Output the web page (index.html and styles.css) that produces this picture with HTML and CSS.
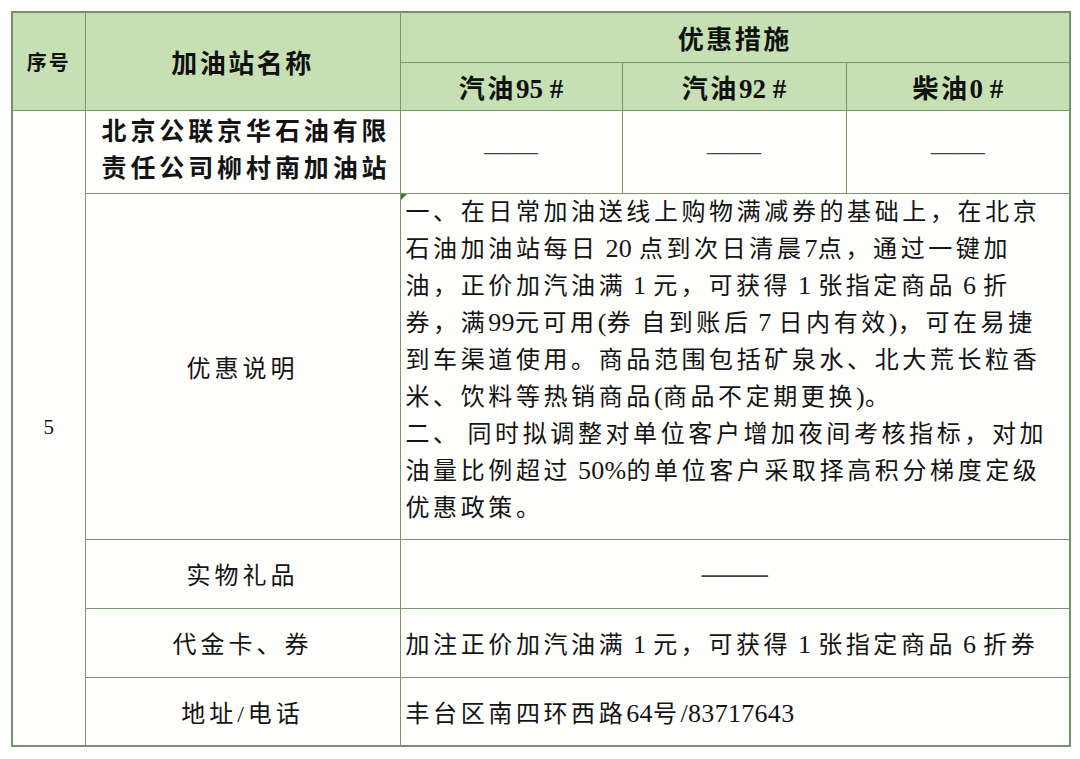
FILE: index.html
```html
<!DOCTYPE html>
<html lang="zh-CN">
<head>
<meta charset="utf-8">
<title>优惠措施</title>
<link rel="stylesheet" href="styles.css">
</head>
<body>
<table class="grid">
  <colgroup>
    <col class="c-no">
    <col class="c-name">
    <col class="c-fuel">
    <col class="c-fuel2">
    <col class="c-fuel2">
  </colgroup>
  <thead>
    <tr class="h1">
      <th rowspan="2" class="h-no">序号</th>
      <th rowspan="2" class="h-name">加油站名称</th>
      <th colspan="3">优惠措施</th>
    </tr>
    <tr class="h2">
      <th>汽油<span class="hl">95 #</span></th>
      <th>汽油<span class="hl">92 #</span></th>
      <th>柴油<span class="hl">0 #</span></th>
    </tr>
  </thead>
  <tbody>
    <tr class="r-name">
      <td rowspan="5" class="no">5</td>
      <td class="name">北京公联京华石油有限<br>责任公司柳村南加油站</td>
      <td class="dash">——</td>
      <td class="dash">——</td>
      <td class="dash">——</td>
    </tr>
    <tr class="r-desc">
      <td class="label">优惠说明</td>
      <td colspan="3" class="desc"><span class="mark"></span>一、在日常加油送线上购物满减券的基础上，在北京<br>石油加油站每日<span class="lat"> 20 </span>点到次日清晨<span class="lat">7</span>点，通过一键加<br>油，正价加汽油满<span class="lat"> 1 </span>元，可获得<span class="lat"> 1 </span>张指定商品<span class="lat"> 6 </span>折<br>券，满<span class="lat">99</span>元可用<span class="lat">(</span>券<span class="lat"> </span>自到账后<span class="lat"> 7 </span>日内有效<span class="lat">)</span>，可在易捷<br>到车渠道使用。商品范围包括矿泉水、北大荒长粒香<br>米、饮料等热销商品<span class="lat">(</span>商品不定期更换<span class="lat">)</span>。<br>二、<span class="lat"> </span>同时拟调整对单位客户增加夜间考核指标，对加<br>油量比例超过<span class="lat"> 50%</span>的单位客户采取择高积分梯度定级<br>优惠政策。</td>
    </tr>
    <tr class="r-row">
      <td class="label">实物礼品</td>
      <td colspan="3" class="dash wide">——</td>
    </tr>
    <tr class="r-row">
      <td class="label">代金卡、券</td>
      <td colspan="3" class="text">加注正价加汽油满<span class="lat"> 1 </span>元，可获得<span class="lat"> 1 </span>张指定商品<span class="lat"> 6 </span>折券</td>
    </tr>
    <tr class="r-row">
      <td class="label">地址/电话</td>
      <td colspan="3" class="text">丰台区南四环西路<span class="lat">64</span>号<span class="lat">/83717643</span></td>
    </tr>
  </tbody>
</table>
</body>
</html>
```

FILE: styles.css
```css
html, body {
  margin: 0;
  padding: 0;
  background: #ffffff;
}

body {
  padding: 11px 0 0 11px;
  font-family: "Liberation Serif", "Noto Sans CJK SC", serif;
  color: #141414;
}

.grid {
  border-collapse: collapse;
  table-layout: fixed;
  width: 1060px;
  border: 2px solid #76906a;
}

.c-no { width: 73px; }
.c-name { width: 315px; }
.c-fuel { width: 222px; }
.c-fuel2 { width: 224px; }

.grid th,
.grid td {
  border: 1.5px solid #7d9670;
  padding: 0;
  text-align: center;
  vertical-align: middle;
}

.grid thead th {
  background: #c6e0b4;
  font-weight: 700;
  font-size: 26px;
  letter-spacing: 2.5px;
  color: #111;
}

.hl {
  font-size: 27px;
  letter-spacing: 0;
}

.h1 { height: 50px; }
.h2 { height: 48px; }

.grid thead .h-no {
  font-size: 20px;
  letter-spacing: 2px;
}

.grid tbody td {
  background: #fefefc;
}

.r-name { height: 83px; }
.r-desc { height: 346px; }
.r-row { height: 69px; }

.no {
  font-size: 21px;
  font-weight: 400;
}

.name {
  font-weight: 700;
  font-size: 25px;
  letter-spacing: 3.9px;
  line-height: 37px;
  text-align: left;
  padding: 0 0 4px 7px !important;
  white-space: nowrap;
}

.dash {
  font-size: 27px;
  letter-spacing: 0;
  color: #444;
}

.dash.wide {
  font-size: 33px;
}

.label {
  font-size: 24px;
  letter-spacing: 4px;
}

.lat {
  font-size: 26px;
  letter-spacing: 0.3px;
  line-height: 1;
}

.desc {
  position: relative;
  text-align: left !important;
  vertical-align: top !important;
  padding: 0 0 0 5px !important;
  font-size: 24px;
  letter-spacing: 3.6px;
  line-height: 37.1px;
  white-space: nowrap;
}

.mark {
  position: absolute;
  left: 0;
  top: 0;
  width: 0;
  height: 0;
  border-top: 6px solid #2e7d32;
  border-right: 6px solid transparent;
}

.text {
  text-align: left !important;
  padding-left: 5px !important;
  font-size: 24px;
  letter-spacing: 3.6px;
  white-space: nowrap;
}
```
